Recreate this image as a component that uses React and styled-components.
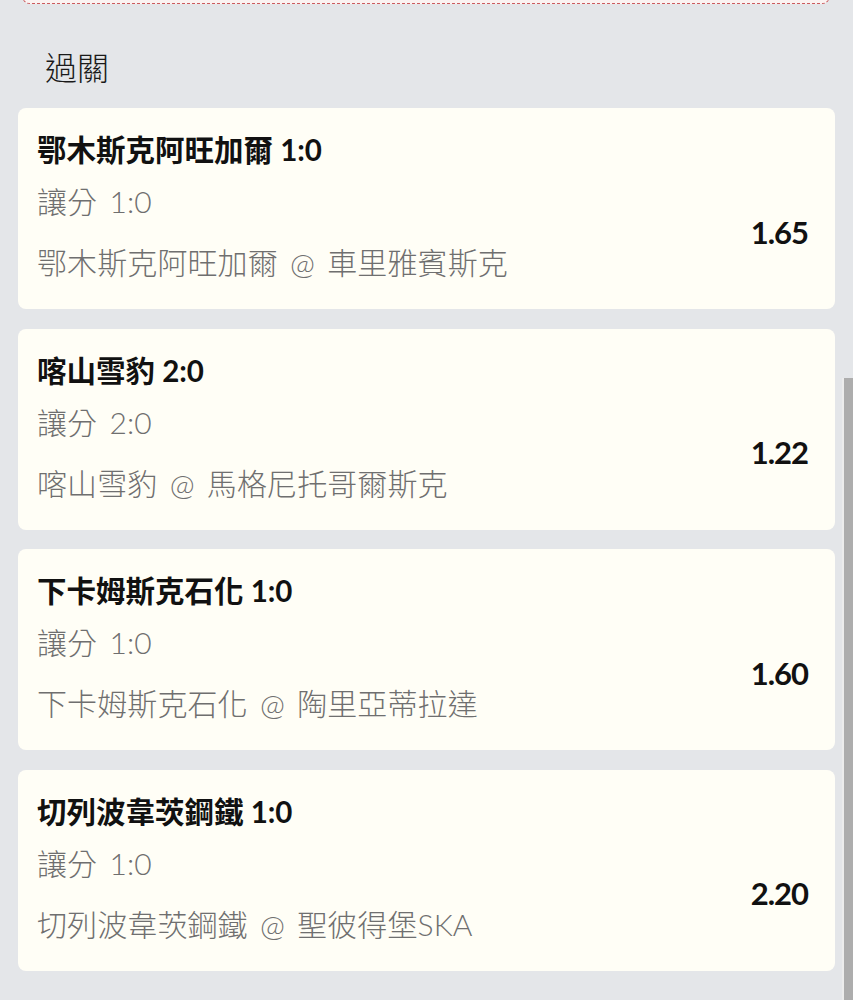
import React from "react";
import styled, { createGlobalStyle } from "styled-components";

const GlobalStyle = createGlobalStyle`
  html, body {
    margin: 0;
    padding: 0;
    background: #e4e6e9;
  }
  body {
    font-family: Lato, "Noto Sans CJK TC", sans-serif;
    overflow: hidden;
  }
`;

const bets = [
  {
    pick: "鄂木斯克阿旺加爾 1:0",
    market: "讓分 1:0",
    match: "鄂木斯克阿旺加爾 @ 車里雅賓斯克",
    odds: "1.65",
  },
  {
    pick: "喀山雪豹 2:0",
    market: "讓分 2:0",
    match: "喀山雪豹 @ 馬格尼托哥爾斯克",
    odds: "1.22",
  },
  {
    pick: "下卡姆斯克石化 1:0",
    market: "讓分 1:0",
    match: "下卡姆斯克石化 @ 陶里亞蒂拉達",
    odds: "1.60",
  },
  {
    pick: "切列波韋茨鋼鐵 1:0",
    market: "讓分 1:0",
    match: "切列波韋茨鋼鐵 @ 聖彼得堡SKA",
    odds: "2.20",
  },
];

const App = () => {
  return (
    <>
      <GlobalStyle />
      <Page>
        <Notice />
        <SectionTitle>過關</SectionTitle>
        <List>
          {bets.map((bet, index) => (
            <Card key={index}>
              <Pick>{bet.pick}</Pick>
              <Row>
                <Info>
                  <Detail>{bet.market}</Detail>
                  <Detail>{bet.match}</Detail>
                </Info>
                <Odds>{bet.odds}</Odds>
              </Row>
            </Card>
          ))}
        </List>
      </Page>
      <ScrollThumb />
    </>
  );
};

const Page = styled.div`
  min-height: 1000px;
  padding: 0 18px;
  box-sizing: border-box;
`;

const Notice = styled.div`
  height: 40px;
  margin: -38px 5px 0 4px;
  border: 1.5px dashed #cc5a5e;
  border-radius: 8px;
  background: #fbf3f2;
`;

const SectionTitle = styled.h2`
  margin: 0;
  padding: 40px 0 16px 27px;
  font-size: 32px;
  line-height: 48px;
  font-weight: 300;
  color: #1a1a1a;
`;

const List = styled.div`
  display: flex;
  flex-direction: column;
  gap: 19.5px;
`;

const Card = styled.div`
  background: #fffef6;
  border-radius: 8px;
  padding: 20px 27px 24px 19px;
  box-sizing: border-box;
  height: 201px;
`;

const Pick = styled.div`
  font-size: 29.5px;
  line-height: 44px;
  font-weight: 700;
  color: #111;
`;

const Row = styled.div`
  display: flex;
  align-items: center;
  justify-content: space-between;
  margin-top: 7px;
`;

const Info = styled.div`
  display: flex;
  flex-direction: column;
  gap: 17px;
`;

const Detail = styled.div`
  font-size: 30px;
  line-height: 44px;
  font-weight: 300;
  letter-spacing: 0.1px;
  word-spacing: 4px;
  color: #6f6f6f;
`;

const Odds = styled.div`
  font-size: 31px;
  letter-spacing: -1px;
  font-weight: 700;
  color: #111;
`;

const ScrollThumb = styled.div`
  position: fixed;
  right: 0;
  top: 378px;
  bottom: 0;
  width: 9px;
  background: #adadad;
  border-left: 2px solid #ececec;
`;

export default App;
